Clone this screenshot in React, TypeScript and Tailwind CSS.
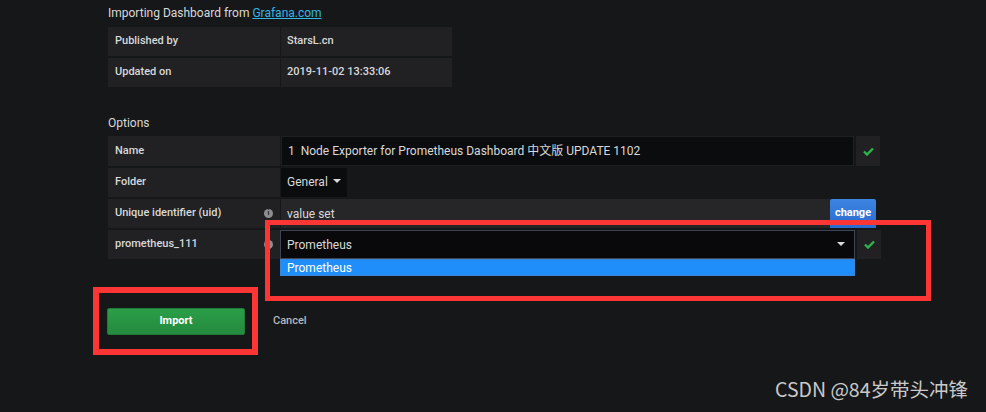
import React from "react";

const font = { fontFamily: "Roboto, 'Noto Sans CJK SC', sans-serif" };

function Check() {
  return (
    <div className="w-[24px] h-full bg-[#212124] flex items-center justify-center">
      <svg width="11" height="9" viewBox="0 0 11 9">
        <path d="M1 4.5 L4 7.5 L10 1.5" stroke="#2bb54a" strokeWidth="2.4" fill="none" />
      </svg>
    </div>
  );
}

function Info() {
  return (
    <div className="w-[9px] h-[9px] rounded-full bg-[#8e8e8e] flex items-center justify-center text-[7px] font-bold text-[#212124] leading-none">
      i
    </div>
  );
}

function Caret() {
  return (
    <svg width="8" height="5" viewBox="0 0 8 5">
      <path d="M0 0 L8 0 L4 4 Z" fill="#d8d9da" />
    </svg>
  );
}

export default function App() {
  return (
    <div className="relative w-[986px] h-[412px] bg-[#161719] text-[#d8d9da] overflow-hidden" style={font}>
      <div className="pl-[108px] pt-[5px] flex flex-col">
        <div className="h-[16px] text-[12px] leading-[16px] text-[#d8d9da]">
          Importing Dashboard from{" "}
          <span className="text-[#33b5e5] underline">Grafana.com</span>
        </div>
        <div className="mt-[6px] w-[344px] flex flex-col gap-[2px]">
          <div className="flex h-[29px] gap-[1px]">
            <div className="w-[172px] bg-[#212124] flex items-center pl-[7px] text-[11px] font-medium">Published by</div>
            <div className="flex-1 bg-[#212124] flex items-center pl-[6px] text-[11px] font-medium">StarsL.cn</div>
          </div>
          <div className="flex h-[29px] gap-[1px]">
            <div className="w-[172px] bg-[#212124] flex items-center pl-[7px] text-[11px] font-medium">Updated on</div>
            <div className="flex-1 bg-[#212124] flex items-center pl-[6px] text-[11px] font-medium">2019-11-02 13:33:06</div>
          </div>
        </div>

        <div className="mt-[28px] h-[16px] text-[12px] leading-[16px]">Options</div>

        <div className="mt-[5px] flex flex-col gap-[2px]">
          <div className="flex h-[30px] gap-[1px]">
            <div className="w-[172px] bg-[#212124] flex items-center pl-[7px] text-[11px] font-medium">Name</div>
            <div className="w-[573px] bg-[#0b0c0e] flex items-center pl-[6px] text-[12px] border border-[#1e1f22]">
              1&nbsp; Node Exporter for Prometheus Dashboard 中文版 UPDATE 1102
            </div>
            <div className="ml-[1px] h-full"><Check /></div>
          </div>
          <div className="flex h-[29px] gap-[1px]">
            <div className="w-[172px] bg-[#212124] flex items-center pl-[7px] text-[11px] font-medium">Folder</div>
            <div className="w-[66px] bg-[#0b0c0e] flex items-center pl-[6px] pb-[2px] gap-[5px] text-[12px]">
              General <Caret />
            </div>
          </div>
          <div className="flex h-[29px] gap-[1px]">
            <div className="w-[172px] bg-[#212124] flex items-center justify-between pl-[7px] pr-[7px] text-[11px] font-medium">
              <span>Unique identifier (uid)</span>
              <Info />
            </div>
            <div className="w-[549px] bg-[#262628] flex items-center pl-[6px] text-[12px]">value set</div>
            <div className="w-[46px] -ml-[1px] rounded-t-[2px] bg-gradient-to-b from-[#3d85e0] to-[#2a6ad0] flex items-center justify-center text-[11px] font-bold text-white">
              change
            </div>
          </div>
          <div className="flex h-[29px] gap-[1px]">
            <div className="w-[172px] bg-[#212124] flex items-center justify-between pl-[7px] pr-[7px] text-[11px] font-medium">
              <span>prometheus_111</span>
              <Info />
            </div>
            <div className="relative w-[575px] -ml-[1px] h-full">
              <div className="h-full bg-[#09090b] border border-[#3a4556] flex items-center justify-between pl-[6px] pr-[9px] text-[12px]">
                <span>Prometheus</span>
                <Caret />
              </div>
              <div className="absolute left-0 top-full w-full h-[17px] bg-[#1f8efa] border border-[#3a86d6] flex items-center pl-[6px] text-[12px] text-white">
                Prometheus
              </div>
            </div>
            <div className="ml-[1px] h-full"><Check /></div>
          </div>
        </div>

        <div className="mt-[49px] flex items-center">
          <div className="w-[138px] h-[27px] -ml-[1px] rounded-[2px] bg-gradient-to-b from-[#2b9e48] to-[#248a3f] border border-[#1f7a37] flex items-center justify-center text-[11px] font-bold text-white">
            Import
          </div>
          <div className="ml-[28px] text-[11px] font-medium text-[#b8b9bd]">Cancel</div>
        </div>
      </div>

      <div className="absolute left-[265px] top-[220px] w-[666px] h-[81px] border-[5px] border-[#fc3535]" />
      <div className="absolute left-[93px] top-[287px] w-[165px] h-[68px] border-[6px] border-[#fc3535]" />

      <div
        className="absolute left-[775px] top-[377px] text-[19.5px] leading-[24px] text-[#c9c9c9]"
        style={{ fontFamily: "'Noto Sans CJK SC', 'Liberation Sans', sans-serif" }}
      >
        CSDN @84岁带头冲锋
      </div>
    </div>
  );
}
